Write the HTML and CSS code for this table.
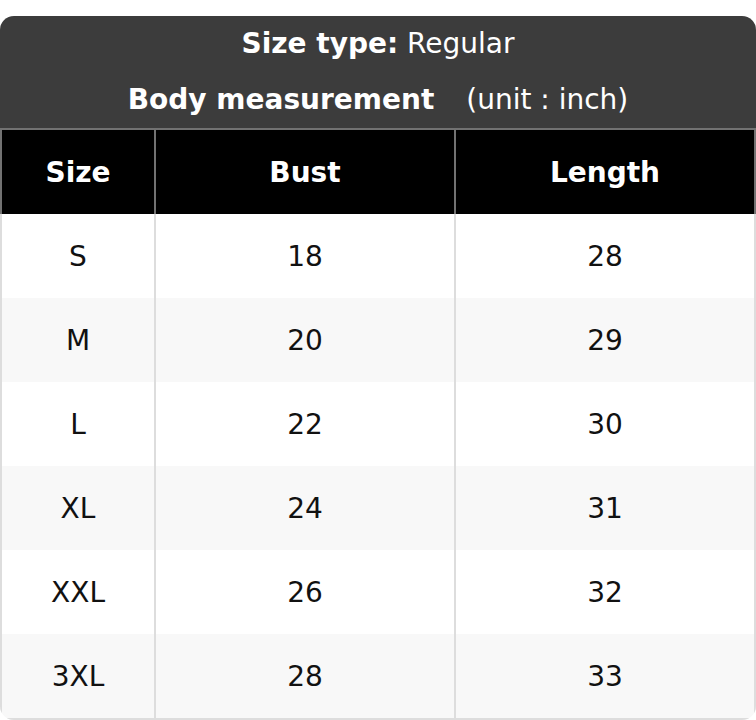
FILE: index.html
```html
<!DOCTYPE html>
<html>
<head>
<meta charset="utf-8">
<link rel="stylesheet" href="styles.css">
</head>
<body>
<div class="card">
  <div class="caption">
    <div class="caption-line"><b>Size type:</b> Regular</div>
    <div class="caption-line"><b>Body measurement</b><span class="unit">(unit : inch)</span></div>
  </div>
  <table class="chart">
    <thead>
      <tr><th class="c1">Size</th><th class="c2">Bust</th><th class="c3">Length</th></tr>
    </thead>
    <tbody>
      <tr><td>S</td><td>18</td><td>28</td></tr>
      <tr><td>M</td><td>20</td><td>29</td></tr>
      <tr><td>L</td><td>22</td><td>30</td></tr>
      <tr><td>XL</td><td>24</td><td>31</td></tr>
      <tr><td>XXL</td><td>26</td><td>32</td></tr>
      <tr><td>3XL</td><td>28</td><td>33</td></tr>
    </tbody>
  </table>
</div>
</body>
</html>
```
FILE: styles.css
```css
html, body {
  margin: 0;
  padding: 0;
  background: #fff;
}
body {
  padding-top: 16px;
  font-family: "DejaVu Sans", sans-serif;
  font-size: 28px;
  color: #111;
}
.card {
  width: 756px;
  border-radius: 14px;
  overflow: hidden;
}
.caption {
  background: #3c3c3c;
  color: #fff;
  text-align: center;
  border-bottom: 2px solid #727272;
}
.caption-line {
  height: 56px;
  line-height: 56px;
  white-space: nowrap;
}
.unit {
  margin-left: 32px;
}
.chart {
  width: 756px;
  border-collapse: separate;
  border-spacing: 0;
  table-layout: fixed;
}
.chart th, .chart td {
  height: 84px;
  padding: 0;
  text-align: center;
  vertical-align: middle;
  box-sizing: border-box;
}
.c1 { width: 156px; }
.c2 { width: 300px; }
.c3 { width: 300px; }
.chart th {
  background: #000;
  color: #fff;
  font-weight: bold;
  border-right: 2px solid #727272;
}
.chart th:first-child {
  border-left: 2px solid #727272;
}
.chart td {
  border-right: 2px solid #dddddd;
  background: #fff;
}
.chart td:first-child {
  border-left: 2px solid #dddddd;
}
.chart tbody tr:nth-child(even) td {
  background: #f8f8f8;
}
.chart tbody tr:last-child td {
  height: 86px;
  border-bottom: 2px solid #dddddd;
}
```
